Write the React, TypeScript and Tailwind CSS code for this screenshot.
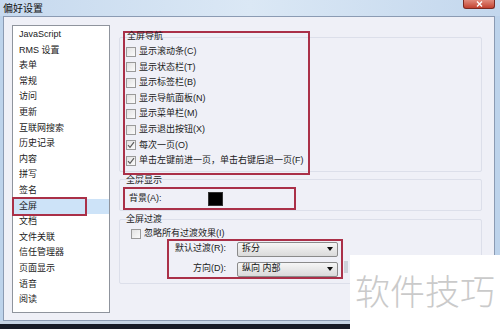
import React from "react";

const FONT = { fontFamily: '"Liberation Sans", "Noto Sans CJK SC", sans-serif' };

const listItems = [
  "JavaScript",
  "RMS 设置",
  "表单",
  "常规",
  "访问",
  "更新",
  "互联网搜索",
  "历史记录",
  "内容",
  "拼写",
  "签名",
  "全屏",
  "文档",
  "文件关联",
  "信任管理器",
  "页面显示",
  "语音",
  "阅读",
];

const navOptions: [string, boolean][] = [
  ["显示滚动条(C)", false],
  ["显示状态栏(T)", false],
  ["显示标签栏(B)", false],
  ["显示导航面板(N)", false],
  ["显示菜单栏(M)", false],
  ["显示退出按钮(X)", false],
  ["每次一页(O)", true],
  ["单击左键前进一页，单击右键后退一页(F)", true],
];

function Check({ checked }: { checked: boolean }) {
  return (
    <div className="flex h-[10px] w-[10px] shrink-0 items-center justify-center border border-[#9a9a9a] bg-gradient-to-br from-[#e2e2e2] to-[#fbfbfb]">
      {checked && (
        <svg width="8" height="8" viewBox="0 0 8 8">
          <path d="M1 4.2 L3 6.3 L7 1.2" fill="none" stroke="#5a5a5a" strokeWidth="1.2" />
        </svg>
      )}
    </div>
  );
}

function Select({ value }: { value: string }) {
  return (
    <div className="flex h-[15px] w-[101px] items-center justify-between rounded-[2px] border border-[#8a8a8a] bg-gradient-to-b from-[#f6f6f6] to-[#dadada] pl-[4px] pr-[4px] text-[9px] text-[#111]">
      <span>{value}</span>
      <svg width="6" height="4" viewBox="0 0 6 4">
        <path d="M0 0 L6 0 L3 4 Z" fill="#111" />
      </svg>
    </div>
  );
}

export default function App() {
  return (
    <div className="relative flex h-[329px] w-[500px] flex-col overflow-hidden bg-[#bdd3eb] text-[#1a1a1a]" style={FONT}>
      {/* title bar */}
      <div className="relative flex h-[16px] shrink-0 items-center bg-gradient-to-r from-[#c6d9ee] via-[#dbe8f5] to-[#c3d7ed] pl-[3px] text-[10px] text-[#111]">
        <span>偏好设置</span>
        <div className="absolute right-[5px] top-0 flex h-[9px] w-[32px] items-center justify-center rounded-b-[3px] border border-t-0 border-[#7a2a22] bg-gradient-to-b from-[#e08a7c] to-[#c2402f]">
          <svg width="7" height="6" viewBox="0 0 7 6">
            <path d="M1 0.5 L6 5.5 M6 0.5 L1 5.5" stroke="#fff" strokeWidth="1.4" />
          </svg>
        </div>
      </div>

      {/* body */}
      <div className="flex h-[305px] shrink-0 pl-[3px] pr-[5px]">
        <div className="flex flex-1 border border-[#8b9bb3] bg-[#eff0f7] pl-[8px] pt-[8px]">
          {/* left list */}
          <div className="h-[288px] w-[98px] shrink-0 border border-[#8f949d] bg-white pt-[1px] text-[9px]">
            {listItems.map((it) => (
              <div
                key={it}
                className={
                  "relative flex h-[15.6px] items-center pl-[6px] " +
                  (it === "全屏" ? "bg-[#cde3f8]" : "")
                }
              >
                {it}
                {it === "全屏" && (
                  <div className="absolute left-[-1px] top-[-2px] h-[19px] w-[75px] border-2 border-[#aa3048]" />
                )}
              </div>
            ))}
          </div>

          {/* right column */}
          <div className="ml-[9px] flex w-[363px] flex-col text-[9px]">
            {/* group 1 */}
            <div className="relative mt-[6px] h-[144px]">
              <div className="absolute inset-x-0 bottom-[3px] top-[6px] rounded-[2px] border border-[#dcdfea]" />
              <div className="relative ml-[4px] flex h-full w-[187px] flex-col border-2 border-[#aa3048] pl-[1px]">
                <div className="mt-[-2px] h-[11px] pl-[1px] leading-[11px]">全屏导航</div>
                <div className="mt-[2px] flex flex-col">
                  {navOptions.map(([label, checked]) => (
                    <div key={label} className="flex h-[15.6px] items-center gap-[3px]">
                      <Check checked={checked} />
                      <span>{label}</span>
                    </div>
                  ))}
                </div>
              </div>
            </div>

            {/* group 2 */}
            <div className="relative flex flex-col">
              <div className="h-[11px] pl-[7px] leading-[11px]">全屏显示</div>
              <div className="absolute inset-x-0 bottom-[-1px] top-[4px] rounded-[2px] border border-[#dcdfea]" />
              <div className="relative ml-[4px] mt-[1px] flex h-[23px] w-[173px] items-center border-2 border-[#aa3048] pl-[4px]">
                <span className="w-[79px]">背景(A):</span>
                <div className="h-[14px] w-[15px] border border-[#333] bg-black" />
              </div>
            </div>

            {/* group 3 */}
            <div className="relative mt-[4px] flex h-[70px] flex-col">
              <div className="absolute inset-x-0 bottom-0 top-[5px] rounded-[2px] border border-[#dcdfea]" />
              <div className="relative h-[11px] pl-[7px] leading-[11px]">全屏过渡</div>
              <div className="relative mt-[1px] flex h-[15px] items-center gap-[3px] pl-[12px]">
                <Check checked={false} />
                <span>忽略所有过渡效果(I)</span>
              </div>
              <div className="relative ml-[48px] mt-[-2px] flex h-[40px] w-[176px] flex-col justify-center gap-[5px] border-2 border-[#aa3048]">
                <div className="flex items-center">
                  <span className="w-[57px] text-right">默认过渡(R):</span>
                  <div className="ml-[11px]">
                    <Select value="拆分" />
                  </div>
                </div>
                <div className="flex items-center">
                  <span className="w-[57px] text-right">方向(D):</span>
                  <div className="ml-[11px]">
                    <Select value="纵向 内部" />
                  </div>
                </div>
                <div className="absolute right-[-7px] top-[20px] h-[12px] w-[4px] bg-[#cdd1da]" />
              </div>
            </div>
          </div>
        </div>
      </div>

      {/* bottom frame */}
      <div className="h-[3px] shrink-0 bg-[#c5d3e3]" />
      <div className="flex-1 bg-[#161b26]" />

      {/* watermark */}
      <div className="absolute left-[350px] top-[255px] flex h-[74px] w-[150px] items-start bg-white pl-[5px] pt-[15px]">
        <span
          className="text-[35px] leading-[40px] text-[#cacaca]"
          style={{ fontFamily: '"Noto Sans CJK SC", sans-serif', fontWeight: 300 }}
        >
          软件技巧
        </span>
      </div>
    </div>
  );
}
